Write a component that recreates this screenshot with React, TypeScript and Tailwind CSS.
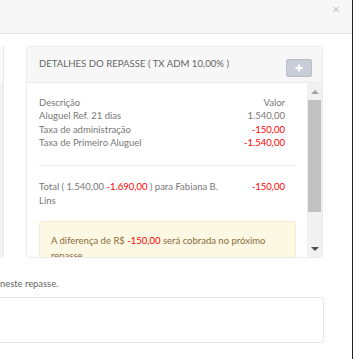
const rows = [
  { label: 'Aluguel Ref. 21 dias', value: '1.540,00', red: false },
  { label: 'Taxa de administração', value: '-150,00', red: true },
  { label: 'Taxa de Primeiro Aluguel', value: '-1.540,00', red: true },
]

const ScrollBar = () => (
  <div className="w-[15px] bg-[#f1f1f1] flex flex-col items-center">
    <div className="h-[17px] flex items-center justify-center">
      <div className="w-0 h-0 border-x-[4px] border-x-transparent border-b-[4px] border-b-[#a3a3a3]" />
    </div>
    <div className="w-[13px] h-[112px] bg-[#c1c1c1]" />
    <div className="flex-1" />
    <div className="h-[17px] flex items-center justify-center">
      <div className="w-0 h-0 border-x-[4px] border-x-transparent border-t-[4px] border-t-[#505050]" />
    </div>
  </div>
)

export default function App() {
  return (
    <div
      className="w-[353px] h-[359px] bg-white border-r border-[#222] overflow-hidden text-[#777]"
      style={{ fontFamily: 'Lato, "Open Sans", sans-serif' }}
    >
      <div className="h-[34px] bg-[#f7f7f7] border-b border-[#e5e5e5] flex items-start justify-end pr-[12px] pt-[1px]">
        <span className="text-[14px] leading-[16px] text-[#c4c4c4]">×</span>
      </div>

      <div className="flex pt-[12px]">
        <div className="w-[4px] h-[212px] border-r border-b border-[#e8e8e8] rounded-br-[4px] flex flex-col overflow-hidden">
          <div className="h-[36px] bg-[#fafafa]" />
          <div className="flex-1 bg-[#f1f1f1]" />
        </div>

        <div className="ml-[22px] w-[297px] h-[212px] border border-[#ebebeb] rounded-[4px] flex flex-col overflow-hidden">
          <div className="h-[36px] shrink-0 bg-[#f7f7f7] border-b border-[#ececec] flex items-center justify-between pl-[12px] pr-[10px]">
            <span className="text-[9.6px] text-[#666]">DETALHES DO REPASSE ( TX ADM 10,00% )</span>
            <div className="w-[26px] h-[18px] mt-[7px] bg-[#c8cdd7] border border-[#b9bec9] rounded-[2px] flex items-center justify-center">
              <svg width="8" height="8" viewBox="0 0 8 8">
                <path d="M4 0.5v7M0.5 4h7" stroke="#fff" strokeWidth="2" />
              </svg>
            </div>
          </div>

          <div className="flex flex-1 min-h-0">
            <div className="flex-1 overflow-hidden pl-[12px] pr-[11px] pt-[13px] text-[9.5px] leading-[13.3px]">
              <div className="pr-[11px]">
                <div className="flex justify-between">
                  <span>Descrição</span>
                  <span>Valor</span>
                </div>
                {rows.map((r) => (
                  <div key={r.label} className="flex justify-between">
                    <span>{r.label}</span>
                    <span className={r.red ? 'text-[#ff0000]' : ''}>{r.value}</span>
                  </div>
                ))}
              </div>

              <div className="mt-[16px] border-t border-[#eeeeee]" />

              <div className="mt-[14px] pr-[11px] flex leading-[14px]">
                <div className="w-[190px]">
                  Total ( 1.540,00 <span className="text-[#ff0000]">-1.690,00</span> ) para Fabiana B. Lins
                </div>
                <div className="flex-1 text-right text-[#ff0000]">-150,00</div>
              </div>

              <div className="mt-[13px] bg-[#fcf8e3] border border-[#faebcc] rounded-[3px] px-[11px] pt-[12px] pb-[12px] text-[#8a6d3b] leading-[14.5px]">
                A diferença de R$ <span className="text-[#ff0000]">-150,00</span> será cobrada no próximo repasse.
              </div>
            </div>
            <ScrollBar />
          </div>
        </div>
      </div>

      <div className="mt-[19px] text-[9.4px] leading-[14px] text-[#666]">neste repasse.</div>

      <div className="mt-[6px] w-[324px] h-[46px] border border-l-0 border-[#e4e7ed] rounded-r-[4px]" />
    </div>
  )
}
